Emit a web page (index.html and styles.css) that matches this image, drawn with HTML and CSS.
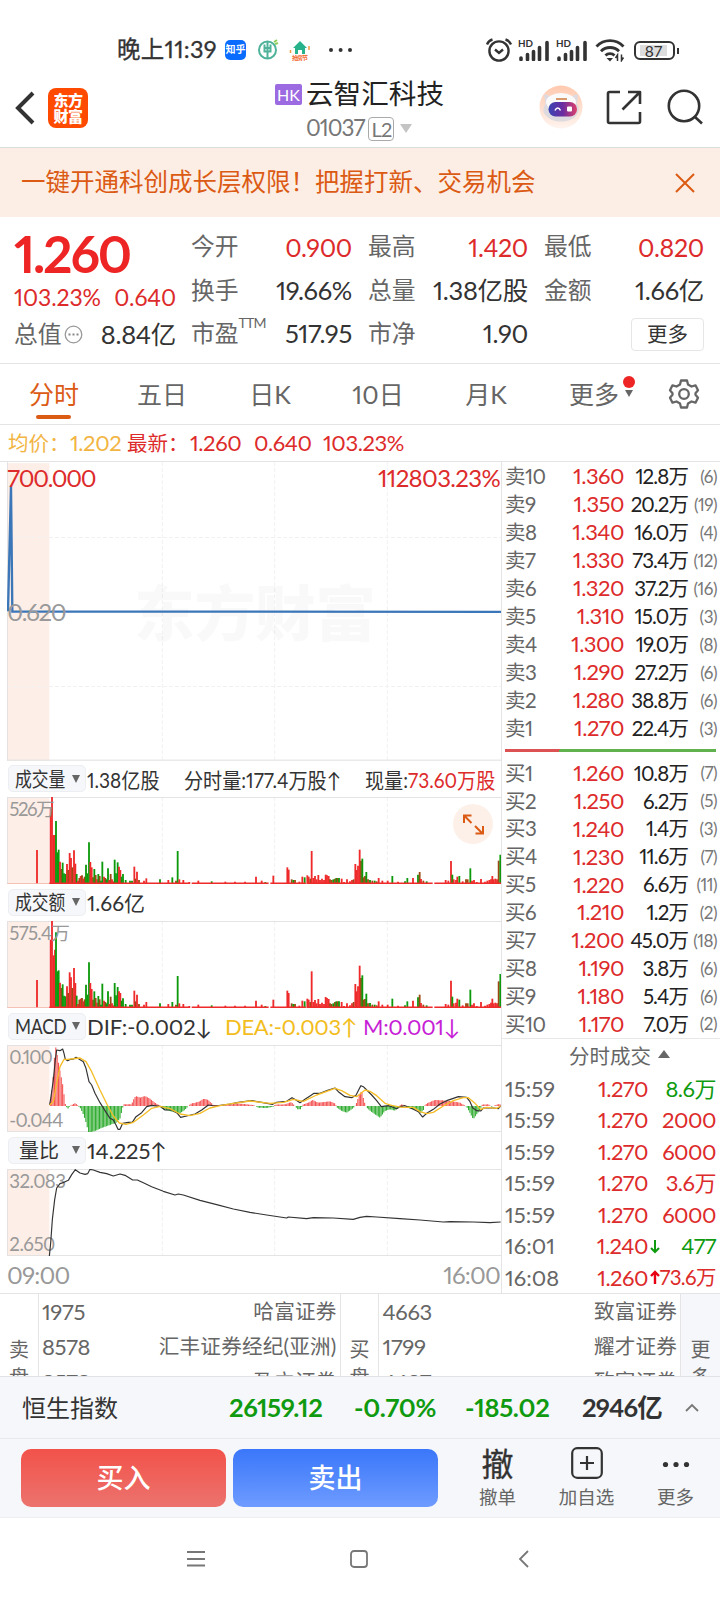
FILE: index.html
```html
<!DOCTYPE html>
<html lang="zh-CN">
<head>
    <meta charset="utf-8">
    <title>云智汇科技 01037</title>
    <link rel="stylesheet" href="styles.css">
</head>
<body>

<div class="status">
    <span class="clock">晚上11:39</span>
    <span class="zhihu">知乎</span>
    <svg class="st-bank" width="22" height="22" viewBox="0 0 22 22" fill="none" stroke="#4fb39c" stroke-width="2">
        <circle cx="10.500" cy="11" r="8.500"/>
        <path d="M10.500 3v16M7.500 5.500v7h6v-7M7.500 9h6"/>
        <path d="M17 3l3-2M18 5l3-1" stroke="#8fce5a"/>
    </svg>
    <svg class="st-house" width="22" height="22" viewBox="0 0 22 22">
        <path d="M11 2L4 9h2v6h3v-4h4v4h3V9h2z" fill="#27b28c"/>
        <path d="M1.500 11v3M20 7v4" stroke="#f29b3c" stroke-width="1.500"/>
        <text class="house-txt" x="3" y="21" textLength="16">抢房节</text>
    </svg>
    <svg class="st-dots" width="26" height="6" viewBox="0 0 26 6" fill="#333">
        <circle cx="3" cy="3" r="2"/><circle cx="12.600" cy="3" r="2"/><circle cx="22" cy="3" r="2"/>
    </svg>
    <svg class="st-alarm" width="26" height="24" viewBox="0 0 26 24" fill="none" stroke="#333" stroke-width="2.400">
        <circle cx="13" cy="13" r="9.600"/>
        <path d="M9 11.500l4 3.500 4-3.500M1 6.500C2 4 4 2.200 6.500 1.500M25 6.500C24 4 22 2.200 19.500 1.500"/>
    </svg>
    <svg class="st-signal" width="32" height="22" viewBox="0 0 32 22">
        <text class="hd" x="0" y="8" textLength="15" lengthAdjust="spacingAndGlyphs">HD</text>
        <path d="M3 20.500v-1.500M9.500 20.500v-5M15.500 20.500v-8M21.500 20.500v-12M29 20.500v-17" stroke="#333" stroke-width="3.600" stroke-linecap="round"/>
    </svg>
    <svg class="st-signal2" width="32" height="22" viewBox="0 0 32 22">
        <text class="hd" x="0" y="8" textLength="15" lengthAdjust="spacingAndGlyphs">HD</text>
        <path d="M3 20.500v-1.500M9.500 20.500v-5M15.500 20.500v-8M21.500 20.500v-12M29 20.500v-17" stroke="#333" stroke-width="3.600" stroke-linecap="round"/>
    </svg>
    <svg class="st-wifi" width="30" height="23" viewBox="0 0 30 23" fill="none" stroke="#333" stroke-width="2.900">
        <path d="M1.500 7.500C9-.3 21-.3 28.500 7.500M6 12.200c5-5 13-5 18 0M10.500 16.500c2.500-2.500 6.500-2.500 9 0"/>
        <path d="M11.500 19L15 22.500l3-3.500z" fill="#333" stroke="none"/>
        <path d="M22.500 22v-6l-2 3M26.500 15.500v6l2-3" stroke-width="1.500"/>
    </svg>
    <span class="battery"><span>87</span></span>
</div>

<div class="header">
    <svg class="back" width="20" height="34" viewBox="0 0 20 34" fill="none" stroke="#333" stroke-width="4">
        <path d="M18 2L3 17l15 15"/>
    </svg>
    <div class="logo">东方<br>财富</div>
    <div class="title">
        <div class="name"><span class="hk">HK</span>云智汇科技</div>
        <div class="code">01037<span class="l2">L2</span><i class="caret"></i></div>
    </div>
    <svg class="robot" width="44" height="44" viewBox="0 0 44 44">
        <defs>
            <linearGradient id="halo" x1="0" y1="0" x2="0" y2="1">
                <stop offset="0" stop-color="#ffc9ae"/><stop offset="1" stop-color="#fff4ef"/>
            </linearGradient>
            <linearGradient id="visor">
                <stop offset="0" stop-color="#3a44b4"/><stop offset=".5" stop-color="#6a2ca0"/><stop offset="1" stop-color="#e0406a"/>
            </linearGradient>
        </defs>
        <circle cx="22" cy="22" r="21.500" fill="url(#halo)"/>
        <path d="M5 10c2-1 4 0 7 2h20c3-2 5-3 7-2l-1 9c3 3 2 9-1 12-4 4-9 5.500-15 5.500S11 35 7.500 31c-4-3-4-8-1-12z" fill="#dedbe0"/>
        <ellipse cx="22" cy="17" rx="15" ry="9" fill="#fbfafb"/>
        <path d="M17 14h11" stroke="#d89a6a" stroke-width="2"/>
        <rect x="9.500" y="17" width="28.500" height="14.500" rx="7.200" fill="url(#visor)"/>
        <path d="M16 25.500c1.500-3.500 4-3.500 5.500 0" fill="none" stroke="#fff" stroke-width="1.500"/>
        <rect x="28" y="21.500" width="5" height="5" rx="1" fill="#fff"/>
    </svg>
    <svg class="share" width="36" height="36" viewBox="0 0 36 36" fill="none" stroke="#333" stroke-width="2.600" stroke-linejoin="round">
        <path d="M14 2H3.500A1.500 1.500 0 0 0 2 3.500v28A1.500 1.500 0 0 0 3.500 33h29a1.500 1.500 0 0 0 1.500-1.500V22M22 2h12v12M34 2L16.500 19.500"/>
    </svg>
    <svg class="search" width="36" height="36" viewBox="0 0 36 36" fill="none" stroke="#333" stroke-width="2.600">
        <circle cx="17" cy="17" r="15.200"/><path d="M27.500 27.500l7.500 7"/>
    </svg>
</div>

<div class="banner">
    <span>一键开通科创成长层权限！把握打新、交易机会</span>
    <svg width="20" height="20" viewBox="0 0 20 20" stroke="#db5a14" stroke-width="2"><path d="M1 1l18 18M19 1L1 19"/></svg>
</div>

<div class="quote">
    <div class="last">
        <div class="price">1.260</div>
        <div class="change"><span>103.23%</span><span>0.640</span></div>
        <div class="cap"><label>总值</label>
            <svg width="19" height="19" viewBox="0 0 19 19"><circle cx="9.500" cy="9.500" r="8.300" fill="none" stroke="#999" stroke-width="1.300"/><path d="M4.500 9.500h2M8.500 9.500h2M12.500 9.500h2" stroke="#888" stroke-width="2"/></svg>
            <b>8.84亿</b></div>
    </div>
    <div class="stats">
        <div><label>今开</label><b class="up">0.900</b></div>
        <div><label>最高</label><b class="up">1.420</b></div>
        <div><label>最低</label><b class="up">0.820</b></div>
        <div><label>换手</label><b>19.66%</b></div>
        <div><label>总量</label><b>1.38亿股</b></div>
        <div><label>金额</label><b>1.66亿</b></div>
        <div><label>市盈<sup>TTM</sup></label><b>517.95</b></div>
        <div><label>市净</label><b>1.90</b></div>
        <div><span class="more-btn">更多</span></div>
    </div>
</div>

<div class="tabs">
    <span class="tab on">分时</span>
    <span class="tab">五日</span>
    <span class="tab">日K</span>
    <span class="tab">10日</span>
    <span class="tab">月K</span>
    <span class="tab more">更多<i class="dot"></i><i class="tri"></i></span>
    <svg class="gear" width="32" height="32" viewBox="0 0 32 32" fill="none" stroke="#666" stroke-width="2.300" stroke-linejoin="round">
        <path d="M13 2.500h6l1 4 3.500 2 4-1.200 2.500 5-2.500 3v1.400l2.500 3-2.500 5-4-1.200-3.500 2-1 4h-6l-1-4-3.500-2-4 1.200-2.500-5 2.500-3v-1.400l-2.500-3 2.500-5 4 1.200 3.500-2z"/>
        <circle cx="16" cy="16" r="4.800"/>
    </svg>
</div>

<div class="avg">
    <span class="gold">均价：</span><span class="gold num">1.202</span>
    <span>最新：</span><span class="num">1.260</span><span class="num">0.640</span><span class="num">103.23%</span>
</div>

<div class="main">
    <div class="charts">
        <!-- chart coordinates are 3 units per pixel -->
        <svg class="chart price-chart" viewBox="21 5 1482 896">
            <rect class="pre" x="21" y="8" width="127" height="893"/>
            <path class="grid" d="M487 5v896M824 5v896M1162 5v896M21 231h1482M21 678h1482"/>
            <path class="edge" d="M22 5v896M21 899h1482"/>
            <text class="mark" x="402" y="526" textLength="726">东方财富</text>
            <path class="trend" d="M24 452L33 75 37 453 1503 454"/>
            <text class="t-up" x="22" y="79" textLength="268">700.000</text>
            <text class="t-up" x="1134" y="79" textLength="368">112803.23%</text>
            <text class="t-mid" x="22" y="480" textLength="178">0.620</text>
        </svg>

        <div class="bar first">
            <span class="pill"><em>成交量</em></span>
            <span class="v1">1.38亿股</span><span class="v2">分时量:177.4万股↑</span><span class="v3">现量:<i>73.60万股</i></span>
        </div>
        <div class="sub">
            <svg class="chart" viewBox="21 0 1482 261">
                <rect class="pre" x="21" y="0" width="127" height="261"/>
                <path class="grid" d="M487 0v261M824 0v261M1162 0v261"/>
                <path class="edge" d="M1503 1H22v261"/>
                <g id="vol"></g>
                <text class="t-sub" x="28" y="56" textLength="136">526万</text>
            </svg>
            <svg class="expand" width="40" height="40" viewBox="0 0 40 40">
                <circle cx="20" cy="20" r="20" fill="#fdf0e9"/>
                <path d="M18.500 11.500H11V19M11.500 12l7 7M22 22l7.500 7.500M30 22v7.500h-7.500" fill="none" stroke="#db5a14" stroke-width="2"/>
            </svg>
        </div>

        <div class="bar">
            <span class="pill"><em>成交额</em></span><span class="amt">1.66亿</span>
        </div>
        <svg class="chart" viewBox="21 0 1482 261">
            <rect class="pre" x="21" y="0" width="127" height="261"/>
            <path class="grid" d="M487 0v261M824 0v261M1162 0v261"/>
            <path class="edge" d="M1503 1H22v261"/>
            <g id="amt"></g>
            <text class="t-sub" x="28" y="56" textLength="182">575.4万</text>
        </svg>

        <div class="bar macd">
            <span class="pill"><em class="latin">MACD</em></span><span class="dif">DIF:-0.002↓</span><span class="dea">DEA:-0.003↑</span><span class="m">M:0.001↓</span>
        </div>
        <svg class="chart" viewBox="21 45 1482 261">
            <rect class="pre" x="21" y="45" width="127" height="261"/>
            <path class="grid" d="M487 45v261M824 45v261M1162 45v261"/>
            <path class="edge" d="M1503 46H22v259h1481"/>
            <text class="t-sub" x="28" y="102" textLength="130">0.100</text>
            <text class="t-sub" x="28" y="292" textLength="162">-0.044</text>
            <g id="hist"></g>
            <polyline class="line" points="149,225 153,200 160,150 166,90 170,60 180,62 188,57 192,70 196,88 203,92 212,88 221,87 228,82 238,88 250,95 258,115 267,155 275,165 285,190 300,218 315,242 330,265 340,270 348,285 354,298 360,298 368,280 385,277 397,277 408,260 425,248 440,230 455,226 480,229 495,240 515,240 532,250 542,262 560,258 585,252 605,240 625,225 645,228 690,222 715,217 755,212 785,217 818,223 830,217 860,214 876,203 888,210 900,218 915,208 930,198 942,190 960,190 985,180 1005,174 1015,185 1035,200 1055,203 1068,196 1080,172 1083,167 1090,170 1100,180 1115,195 1130,212 1144,230 1165,227 1175,230 1190,236 1200,230 1215,227 1240,238 1255,245 1265,258 1268,261 1280,250 1300,238 1320,222 1340,212 1360,205 1375,200 1400,202 1410,215 1418,233 1430,242 1442,243 1450,234 1480,234 1495,236 1502,228"/>
            <polyline class="line gold-line" points="149,225 160,215 170,160 180,110 192,88 203,88 240,84 258,95 275,125 300,180 322,225 340,258 358,279 378,283 400,277 430,255 455,235 480,229 510,236 540,252 570,257 600,250 630,234 660,227 700,220 750,213 810,220 850,217 880,208 910,214 950,195 1005,175 1025,182 1050,196 1070,200 1083,190 1095,180 1110,184 1130,197 1155,220 1175,226 1205,232 1240,232 1260,245 1280,251 1300,247 1330,228 1360,212 1390,203 1405,203 1425,220 1442,238 1460,232 1490,235 1502,228"/>
        </svg>

        <div class="bar">
            <span class="pill wide"><em>量比</em></span><span class="ratio">14.225↑</span>
        </div>
        <svg class="chart" viewBox="21 418 1482 261">
            <rect class="pre" x="21" y="418" width="127" height="261"/>
            <path class="grid" d="M487 418v261M824 418v261M1162 418v261"/>
            <path class="edge" d="M1503 419H22v259h1481"/>
            <text class="t-sub" x="28" y="474" textLength="170">32.083</text>
            <text class="t-sub" x="28" y="665" textLength="138">2.650</text>
            <polyline class="line" points="148,680 152,640 157,570 164,510 170,475 180,462 192,458 205,452 215,435 226,420 240,430 255,434 263,432 270,419 280,421 300,428 320,432 340,439 360,433 375,437 398,451 412,451 430,459 455,471 490,485 525,496 535,493 550,496 600,512 650,525 700,538 750,548 800,556 860,565 865,562 920,567 940,564 1000,565 1060,569 1080,563 1100,560 1130,562 1200,567 1260,571 1330,577 1350,576 1420,577 1470,579 1502,577"/>
        </svg>
        <div class="axis"><span>09:00</span><span>16:00</span></div>
    </div>

    <div class="side">
        <div class="book">
            <div><span>卖10</span><b>1.360</b><em>12.8万</em><i>(6)</i></div>
            <div><span>卖9</span><b>1.350</b><em>20.2万</em><i>(19)</i></div>
            <div><span>卖8</span><b>1.340</b><em>16.0万</em><i>(4)</i></div>
            <div><span>卖7</span><b>1.330</b><em>73.4万</em><i>(12)</i></div>
            <div><span>卖6</span><b>1.320</b><em>37.2万</em><i>(16)</i></div>
            <div><span>卖5</span><b>1.310</b><em>15.0万</em><i>(3)</i></div>
            <div><span>卖4</span><b>1.300</b><em>19.0万</em><i>(8)</i></div>
            <div><span>卖3</span><b>1.290</b><em>27.2万</em><i>(6)</i></div>
            <div><span>卖2</span><b>1.280</b><em>38.8万</em><i>(6)</i></div>
            <div><span>卖1</span><b>1.270</b><em>22.4万</em><i>(3)</i></div>
        </div>
        <div class="ratio-bar"></div>
        <div class="book bids">
            <div><span>买1</span><b>1.260</b><em>10.8万</em><i>(7)</i></div>
            <div><span>买2</span><b>1.250</b><em>6.2万</em><i>(5)</i></div>
            <div><span>买3</span><b>1.240</b><em>1.4万</em><i>(3)</i></div>
            <div><span>买4</span><b>1.230</b><em>11.6万</em><i>(7)</i></div>
            <div><span>买5</span><b>1.220</b><em>6.6万</em><i>(11)</i></div>
            <div><span>买6</span><b>1.210</b><em>1.2万</em><i>(2)</i></div>
            <div><span>买7</span><b>1.200</b><em>45.0万</em><i>(18)</i></div>
            <div><span>买8</span><b>1.190</b><em>3.8万</em><i>(6)</i></div>
            <div><span>买9</span><b>1.180</b><em>5.4万</em><i>(6)</i></div>
            <div><span>买10</span><b>1.170</b><em>7.0万</em><i>(2)</i></div>
        </div>
        <div class="ticks-head">分时成交<i></i></div>
        <div class="ticks">
            <div><span>15:59</span><b>1.270</b><u></u><em class="down">8.6万</em></div>
            <div><span>15:59</span><b>1.270</b><u></u><em>2000</em></div>
            <div><span>15:59</span><b>1.270</b><u></u><em>6000</em></div>
            <div><span>15:59</span><b>1.270</b><u></u><em>3.6万</em></div>
            <div><span>15:59</span><b>1.270</b><u></u><em>6000</em></div>
            <div><span>16:01</span><b>1.240</b><u><svg width="10" height="15" viewBox="0 0 10 15" fill="none" stroke="#0f9a0f" stroke-width="2"><path d="M5 1v12M1 9l4 4 4-4"/></svg></u><em class="down">477</em></div>
            <div><span>16:08</span><b>1.260</b><u><svg width="10" height="15" viewBox="0 0 10 15" fill="none" stroke="#e60012" stroke-width="2.400"><path d="M5 14V2M1 6l4-4 4 4"/></svg></u><em class="tight">73.6万</em></div>
        </div>
    </div>
</div>

<div class="brokers">
    <div class="tag">卖<br>盘</div>
    <div class="list">
        <div><span>1975</span><em>哈富证券</em></div>
        <div><span>8578</span><em>汇丰证券经纪(亚洲)</em></div>
        <div><span>8578</span><em>盈立证券</em></div>
    </div>
    <div class="tag">买<br>盘</div>
    <div class="list">
        <div><span>4663</span><em>致富证券</em></div>
        <div><span>1799</span><em>耀才证券</em></div>
        <div><span>4637</span><em>致富证券</em></div>
    </div>
    <div class="tag all">更<br>多</div>
</div>

<div class="index">
    <span class="idx-name">恒生指数</span>
    <b>26159.12</b>
    <b>-0.70%</b>
    <b>-185.02</b>
    <b class="dark">2946亿</b>
    <svg width="14" height="9" viewBox="0 0 14 9" fill="none" stroke="#777" stroke-width="1.800"><path d="M1 8l6-6 6 6"/></svg>
</div>

<div class="actions">
    <div class="btn buy">买入</div>
    <div class="btn sell">卖出</div>
    <div class="act"><span class="big">撤</span>撤单</div>
    <div class="act">
        <svg width="32" height="32" viewBox="0 0 32 32" fill="none" stroke="#333" stroke-width="2.200"><rect x="1.200" y="1.200" width="29.600" height="29.600" rx="5"/><path d="M16 9v14M9 16h14"/></svg>加自选
    </div>
    <div class="act">
        <svg width="32" height="32" viewBox="0 0 32 32" fill="#333"><circle cx="5.500" cy="17.500" r="2.600"/><circle cx="16" cy="17.500" r="2.600"/><circle cx="26.500" cy="17.500" r="2.600"/></svg>更多
    </div>
</div>

<div class="nav">
    <svg width="18" height="18" viewBox="0 0 18 18" stroke="#777" stroke-width="1.800"><path d="M0 2h18M0 9h18M0 15.500h18"/></svg>
    <svg width="18" height="18" viewBox="0 0 18 18" fill="none" stroke="#777" stroke-width="1.800"><rect x="1" y="1" width="16" height="16" rx="3"/></svg>
    <svg width="11" height="18" viewBox="0 0 11 18" fill="none" stroke="#777" stroke-width="1.800"><path d="M10 1L2 9l8 8"/></svg>
</div>

<script src="charts.js"></script>
</body>
</html>
```
FILE: styles.css
```css
* {
    box-sizing: border-box;
}

body {
    margin: 0;
    width: 720px;
    height: 1600px;
    overflow: hidden;
    background: #fff;
    color: #333;
    font-family: Lato, "Noto Sans CJK SC", sans-serif;
    font-variant-numeric: proportional-nums;
    font-size: 24px;
    line-height: 1;
    white-space: nowrap;
}

b, em, i, u {
    font-weight: normal;
    font-style: normal;
    text-decoration: none;
}

svg {
    display: block;
    flex: none;
}

.up {
    color: #dd2b2b;
}

/* status bar */
.status {
    display: flex;
    align-items: center;
    height: 72px;
    padding: 28px 0 0 117px;
    font-size: 23px;
}

.clock {
    width: 108px;
    font-size: 23.500px;
    letter-spacing: .3px;
    -webkit-text-stroke: .3px #333;
}

.zhihu {
    width: 21px;
    height: 20px;
    border-radius: 5px;
    background: #0a6cff;
    color: #fff;
    font-size: 10px;
    font-weight: 700;
    line-height: 19px;
    text-align: center;
}

.st-bank { margin-left: 11px; }
.st-house { margin-left: 10px; }
.st-dots { margin-left: 17px; }
.st-alarm { margin-left: 132px; }
.st-signal { margin-left: 6px; }
.st-signal2 { margin-left: 6px; }
.st-wifi { margin-left: 7px; }

.house-txt {
    font-size: 6px;
    font-weight: 700;
    fill: #f2662b;
}

.hd {
    font-size: 10px;
    font-weight: 700;
    fill: #333;
}

.battery {
    display: flex;
    position: relative;
    width: 41px;
    height: 19px;
    margin-left: 9px;
    padding: 2px;
    border: 2px solid #333;
    border-radius: 6px;
}

.battery::after {
    content: "";
    position: absolute;
    right: -6px;
    top: 5px;
    width: 2px;
    height: 6px;
    background: #333;
}

.battery span {
    width: 27px;
    margin-left: 2px;
    background: #ddd;
    font-size: 15.500px;
    line-height: 12px;
    text-align: center;
}

/* header */
.header {
    display: flex;
    height: 76px;
    border-bottom: 1px solid #d8dedb;
}

.back {
    margin: 19px 0 0 15px;
}

.logo {
    width: 40px;
    height: 40px;
    margin: 16px 0 0 13px;
    padding-top: 4px;
    border-radius: 8px;
    background: #ff4a00;
    color: #fff;
    font-size: 15px;
    font-weight: 900;
    line-height: 16px;
    letter-spacing: -.5px;
    text-align: center;
}

.title {
    width: 265px;
    margin-left: 187px;
}

.name {
    display: flex;
    align-items: center;
    height: 43px;
    font-size: 27.600px;
    color: #222;
}

.hk {
    width: 27px;
    height: 21px;
    margin: 2px 4px 0 0;
    border-radius: 2px;
    background: #9c6be2;
    color: #fff;
    font-size: 16px;
    line-height: 21px;
    text-align: center;
}

.code {
    display: flex;
    align-items: center;
    height: 26px;
    padding-left: 31px;
    color: #777;
    font-size: 22.500px;
    letter-spacing: -1px;
}

.l2 {
    width: 26px;
    height: 24px;
    margin: 1px 0 0 4px;
    border: 1.500px solid #aaa;
    border-radius: 4px;
    font-size: 20px;
    line-height: 22px;
    text-align: center;
}

.caret {
    margin-left: 6px;
    border: 6.500px solid transparent;
    border-top: 9px solid #c4c4c4;
    border-bottom: 0;
}

.robot { margin: 13px 0 0 -1px; }
.share { margin: 18px 0 0 23px; }
.search { margin: 17px 0 0 25px; }

.banner {
    display: flex;
    align-items: center;
    justify-content: space-between;
    height: 69px;
    padding: 0 25px 0 21px;
    background: #fceee5;
    color: #db5a14;
    font-size: 24.500px;
}

/* quote */
.quote {
    display: flex;
    height: 147px;
    padding: 8px 14px 0 14px;
    border-bottom: 1px solid #e4e4e4;
}

.last {
    width: 162px;
    margin-right: 15px;
    color: #dd2b2b;
}

.price {
    height: 57px;
    color: #ee2525;
    font-size: 51.500px;
    font-weight: 700;
    line-height: 57px;
    letter-spacing: -2.200px;
}

.change {
    display: flex;
    justify-content: space-between;
    height: 30px;
    font-size: 23px;
    line-height: 30px;
    letter-spacing: -.1px;
}

.cap {
    display: flex;
    align-items: center;
    height: 45px;
    color: #333;
}

.cap svg {
    margin-left: 2px;
}

.cap b {
    margin-left: auto;
}

.quote label {
    color: #666;
    font-size: 23.800px;
}

.quote b {
    font-size: 25.500px;
    letter-spacing: -.3px;
}

.stats {
    display: grid;
    grid-template-columns: 161px 160px 160px;
    grid-template-rows: 44px 43px 44px;
    column-gap: 16px;
}

.stats div {
    display: flex;
    align-items: center;
    justify-content: space-between;
}

.stats .up {
    font-size: 25px;
}

.quote sup {
    display: inline-block;
    width: 0;
    font-size: 14px;
    line-height: 0;
    letter-spacing: -.8px;
    vertical-align: 14px;
}

.more-btn {
    width: 73px;
    height: 33px;
    margin-left: auto;
    border: 1px solid #e6e6e6;
    border-radius: 4px;
    font-size: 20.500px;
    line-height: 30px;
    text-align: center;
}

/* tabs */
.tabs {
    display: flex;
    align-items: center;
    height: 61px;
    border-bottom: 1px solid #e4e4e4;
}

.tab {
    position: relative;
    width: 108px;
    color: #666;
    font-size: 25px;
    line-height: 60px;
    text-align: center;
}

.on {
    color: #db5a14;
}

.on::after {
    content: "";
    position: absolute;
    left: 36px;
    top: 51px;
    width: 35px;
    height: 4px;
    border-radius: 2px;
    background: #db5a14;
}

.dot {
    position: absolute;
    left: 83px;
    top: 12px;
    width: 12px;
    height: 12px;
    border-radius: 50%;
    background: #ee2525;
}

.tri {
    position: absolute;
    left: 85px;
    top: 26px;
    border: 4.500px solid transparent;
    border-top: 7px solid #666;
    border-bottom: 0;
}

.gear {
    margin-left: 20px;
}

.avg {
    display: grid;
    grid-template-columns: 62px 57px 63px 64px 69px 90px;
    align-items: center;
    height: 37px;
    padding-left: 8px;
    border-bottom: 1px solid #e4e4e4;
    color: #dd2b2b;
    font-size: 20.500px;
}

.avg .num {
    font-size: 22px;
    letter-spacing: -.4px;
}

.avg .gold {
    color: #f2b544;
}

/* charts */
.main {
    display: flex;
    height: 832px;
    border-bottom: 1px solid #e4e4e4;
}

.charts {
    width: 501px;
}

.chart {
    width: 494px;
    height: 87px;
    margin-left: 7px;
}

.price-chart {
    height: 299px;
}

.pre {
    fill: #fdeee7;
}

.grid {
    fill: none;
    stroke: #f1f1f1;
    stroke-width: 3;
    stroke-dasharray: 12 6;
}

.edge {
    fill: none;
    stroke: #dfdfdf;
    stroke-width: 3;
}

.mark {
    font-size: 182px;
    font-weight: 900;
    fill: #000;
    fill-opacity: .025;
}

.trend {
    fill: none;
    stroke: #3b76b8;
    stroke-width: 7;
}

.t-up, .t-mid {
    font-size: 72px;
    fill: #dd2b2b;
}

.t-mid {
    fill: #999;
}

.t-sub {
    font-size: 56px;
    fill: #999;
}

.line {
    fill: none;
    stroke: #333;
    stroke-width: 3.500;
    stroke-linejoin: round;
}

.gold-line {
    stroke: #f5bd27;
    stroke-width: 4;
}

.sub {
    position: relative;
}

.expand {
    position: absolute;
    left: 453px;
    top: 7px;
}

.bar {
    display: flex;
    align-items: center;
    height: 37px;
    padding-left: 8px;
    font-size: 21px;
}

.bar.first {
    height: 36px;
}

.pill {
    display: flex;
    align-items: center;
    justify-content: space-between;
    width: 78px;
    height: 27px;
    margin: 0 1px 1px 0;
    padding: 0 5px 0 6px;
    border: 1px solid #eceef1;
    border-radius: 5px;
    background: #f5f7fa;
    font-size: 20px;
}

.pill em {
    width: 50px;
    transform: scaleX(.84);
    transform-origin: left;
}

.pill .latin {
    font-size: 20.500px;
}

.pill::after {
    content: "";
    border: 4.500px solid transparent;
    border-top: 8px solid #666;
    border-bottom: 0;
}

.pill.wide {
    padding-left: 10px;
}

.pill.wide em {
    transform: none;
}

.v1, .v2, .v3 {
    transform: scaleX(.91);
    transform-origin: left;
}

.v1 { width: 97px; }
.v2 { width: 181px; }
.v3 { width: 130px; }

.v3 i {
    color: #dd2b2b;
}

.macd, .ratio {
    font-size: 22px;
    letter-spacing: -.1px;
}

.dif { width: 138px; }

.dea {
    width: 138px;
    color: #f2bd1d;
    letter-spacing: -.3px;
}

.m {
    color: #c71fd6;
    letter-spacing: -.3px;
}

.axis {
    display: flex;
    justify-content: space-between;
    padding: 7px 1px 0 7px;
    color: #999;
    font-size: 24px;
    letter-spacing: -.8px;
}

/* order book */
.side {
    width: 219px;
    padding: 0 4px 0 4px;
    border-left: 1px solid #e4e4e4;
    font-size: 22px;
}

.book div {
    display: grid;
    grid-template-columns: 58px 60px 64px 29px;
    align-items: center;
    height: 28px;
    text-align: right;
    letter-spacing: -.5px;
}

.bids div {
    height: 27.900px;
}

.book span {
    margin-left: -1px;
    color: #666;
    font-size: 20.500px;
    text-align: left;
}

.book b {
    color: #dd2b2b;
}

.book em {
    color: #222;
    font-size: 20.500px;
    letter-spacing: -.9px;
}

.book i {
    color: #777;
    font-size: 17px;
}

.ratio-bar {
    height: 3px;
    margin: 7px 0 7px -1px;
    background: linear-gradient(120deg, #dc5252 26%, #62b14f 26%);
}

.ticks-head {
    display: flex;
    align-items: center;
    height: 35px;
    margin: 0 -4px 0 -4px;
    padding-left: 67px;
    border-top: 1px solid #e8e8e8;
    color: #666;
    font-size: 20.500px;
}

.ticks-head i {
    margin: -4px 0 0 7px;
    border: 6px solid transparent;
    border-top: 0;
    border-bottom: 8px solid #666;
}

.ticks div {
    display: grid;
    grid-template-columns: 72px 70px 14px 54px;
    align-items: center;
    height: 31.500px;
    color: #dd2b2b;
    text-align: right;
    letter-spacing: -.5px;
}

.ticks span {
    margin-left: -1px;
    color: #666;
    letter-spacing: 0;
    text-align: left;
}

.ticks u {
    padding-left: 2px;
}

.ticks .down {
    color: #0f9a0f;
}

.ticks .tight {
    margin-left: -4px;
    font-size: 20.500px;
    letter-spacing: -.6px;
}

/* broker queue */
.brokers {
    display: flex;
    height: 82px;
    overflow: hidden;
    color: #666;
}

.tag {
    width: 39px;
    padding-top: 41px;
    border-right: 1px solid #e4e4e4;
    font-size: 20px;
    line-height: 28px;
    text-align: center;
}

.tag.all {
    border: 0;
    background: #f5f7fa;
}

.list {
    width: 302px;
    border-right: 1px solid #e4e4e4;
    padding: 0 3px;
}

.list div {
    display: flex;
    align-items: center;
    justify-content: space-between;
    height: 35px;
    font-size: 22px;
    letter-spacing: -.3px;
}

.list em {
    font-size: 20.600px;
    letter-spacing: .2px;
}

/* index strip */
.index {
    display: grid;
    grid-template-columns: 207px 125px 111px 117px 103px 16px;
    align-items: center;
    height: 63px;
    padding-left: 22px;
    border-top: 1px solid #dfe1e4;
    border-bottom: 1px solid #e6e8eb;
    background: #f5f7fa;
}

.index b {
    color: #0f9a0f;
    font-size: 25.500px;
    font-weight: 700;
    letter-spacing: -.3px;
}

.index .dark {
    color: #333;
    letter-spacing: -.8px;
}

.actions {
    display: flex;
    height: 78px;
    padding: 10px 0 0 21px;
    background: #f5f7fa;
}

.btn {
    width: 205px;
    height: 58px;
    margin-right: 7px;
    border-radius: 10px;
    color: #fff;
    font-size: 27px;
    font-weight: 500;
    line-height: 57px;
    text-align: center;
}

.buy {
    background: linear-gradient(#f2524a, #ec736e);
}

.sell {
    background: linear-gradient(#3a77fa, #6e9bff);
}

.act {
    display: flex;
    flex-direction: column;
    align-items: center;
    width: 89px;
    margin-top: -2px;
    color: #666;
    font-size: 18.500px;
    line-height: 37px;
}

.sell + .act {
    margin-left: 8px;
}

.big {
    height: 32px;
    color: #333;
    font-size: 32px;
    line-height: 34px;
    -webkit-text-stroke: .3px #333;
}

.nav {
    display: flex;
    align-items: center;
    height: 83px;
    padding-left: 187px;
    border-top: 1px solid #eceef0;
}

.nav svg + svg {
    margin-left: 145px;
}

.nav svg:last-child {
    margin-left: 150px;
}
```
FILE: charts.js
```javascript
var NS = 'http://www.w3.org/2000/svg';
var RED = '#ee2a2a', GREEN = '#0c9a0c', MIX = '#9a4a12';
var COLORS = { r: RED, g: GREEN, m: MIX };

// x, volume height, turnover height, colour
var bars = [
    [111,102,84,'r'],[152,230,205,'r'],[156,261,261,'r'],[161,147,158,'r'],[165,147,175,'r'],[168,189,227,'g'],[172,95,110,'g'],[176,103,113,'g'],
    [180,67,76,'r'],[184,45,60,'m'],[188,64,71,'g'],[192,32,37,'g'],[197,30,35,'g'],[201,60,65,'r'],[205,42,45,'m'],[209,93,107,'r'],
    [213,78,92,'r'],[217,50,60,'m'],[222,101,120,'r'],[226,61,75,'r'],[230,30,37,'g'],[234,10,12,'r'],[238,18,25,'m'],[242,24,28,'r'],
    [246,26,30,'m'],[250,16,20,'r'],[254,22,26,'m'],[258,58,70,'g'],[262,32,40,'g'],[267,125,137,'g'],[271,66,75,'r'],[275,50,57,'r'],
    [279,20,25,'m'],[283,45,50,'g'],[287,27,30,'m'],[291,14,16,'r'],[295,30,36,'g'],[299,24,26,'m'],[303,10,10,'g'],[307,67,73,'g'],
    [312,22,22,'r'],[316,18,18,'m'],[320,14,14,'g'],[324,47,50,'g'],[328,12,12,'r'],[332,30,34,'m'],[336,14,14,'r'],[340,8,8,'r'],
    [344,73,75,'g'],[348,32,38,'g'],[353,65,63,'g'],[357,52,50,'r'],[361,42,45,'r'],[365,22,22,'g'],[369,30,29,'g'],[377,12,12,'g'],
    [390,10,10,'g'],[396,10,10,'g'],[403,52,52,'r'],[407,16,20,'m'],[411,37,40,'r'],[417,12,12,'m'],[432,10,10,'r'],[439,17,18,'r'],
    [480,14,14,'g'],[505,12,12,'r'],[517,20,18,'g'],[528,10,10,'m'],[533,99,96,'g'],[538,14,14,'r'],[550,12,12,'r'],[568,6,6,'r'],
    [595,10,10,'r'],[635,8,8,'g'],[676,7,7,'r'],[705,7,7,'r'],[735,7,7,'r'],[768,22,22,'r'],[785,10,10,'r'],[796,6,6,'g'],
    [820,25,25,'r'],[862,50,52,'r'],[866,43,45,'r'],[875,14,14,'m'],[880,12,12,'g'],[885,12,12,'m'],[898,7,7,'r'],[907,22,22,'r'],
    [914,20,20,'g'],[922,26,28,'r'],[926,22,25,'r'],[931,16,18,'m'],[935,99,110,'r'],[940,18,18,'r'],[945,24,24,'r'],[950,14,14,'r'],
    [955,27,27,'r'],[960,12,12,'r'],[966,16,16,'r'],[972,12,12,'r'],[977,28,33,'r'],[981,26,30,'r'],[986,24,27,'r'],[990,14,14,'m'],
    [995,12,12,'m'],[1000,14,14,'g'],[1005,16,18,'m'],[1009,18,20,'g'],[1013,18,20,'m'],[1017,18,20,'g'],[1025,16,18,'r'],[1032,6,6,'r'],
    [1041,14,14,'r'],[1050,8,8,'r'],[1056,12,14,'r'],[1061,14,18,'m'],[1066,60,72,'r'],[1070,42,50,'r'],[1074,55,65,'r'],[1079,103,127,'r'],
    [1083,70,90,'m'],[1087,76,98,'g'],[1091,20,25,'m'],[1095,24,27,'m'],[1099,36,43,'g'],[1104,14,14,'m'],[1110,12,15,'g'],[1117,10,10,'m'],
    [1124,10,10,'g'],[1130,8,8,'m'],[1136,18,20,'r'],[1147,10,10,'r'],[1163,10,10,'r'],[1177,24,28,'g'],[1194,7,7,'r'],[1215,8,8,'g'],
    [1222,18,20,'g'],[1239,18,22,'r'],[1254,28,32,'g'],[1259,36,40,'m'],[1263,15,15,'r'],[1270,10,10,'m'],[1280,8,8,'g'],[1337,12,12,'r'],
    [1345,10,10,'r'],[1353,69,82,'r'],[1357,28,34,'g'],[1361,14,14,'r'],[1368,12,16,'r'],[1372,22,28,'r'],[1378,24,25,'g'],[1388,8,8,'r'],
    [1398,14,14,'m'],[1403,14,14,'m'],[1411,47,55,'g'],[1416,10,10,'r'],[1422,12,14,'r'],[1430,6,6,'r'],[1443,15,18,'r'],[1455,7,7,'r'],
    [1462,10,10,'r'],[1468,12,12,'r'],[1473,14,16,'r'],[1477,24,28,'r'],[1481,14,14,'r'],[1486,16,16,'r'],[1491,14,14,'r'],[1496,70,80,'m'],
    [1501,88,102,'g']
];

// x, bar length above (+) or below (-) the zero line
var macd = [
    [150,5],[158,70],[166,183],[172,150],[180,105],[188,65],[194,20],[197,0],[204,-8],[210,0],[226,9],[235,0],[242,-8],[250,-25],[260,-55],
    [265,-80],[285,-75],[300,-68],[330,-57],[350,-50],[360,-38],[368,-5],[372,5],[395,5],[400,18],[407,30],[420,25],[435,30],[450,22],
    [462,12],[480,0],[490,-10],[520,-18],[540,-22],[556,-10],[565,0],[575,8],[595,12],[612,22],[625,18],[640,3],[680,2],[710,8],[760,3],
    [775,-5],[800,-6],[820,-2],[825,4],[855,5],[874,12],[885,0],[893,-10],[903,-10],[908,4],[925,10],[938,18],[955,10],[990,14],[1005,8],
    [1012,-5],[1025,-15],[1040,-20],[1055,-10],[1064,-2],[1070,10],[1078,35],[1085,45],[1092,15],[1100,-5],[1115,-18],[1140,-35],
    [1155,-15],[1170,-10],[1185,-14],[1195,-3],[1203,5],[1215,2],[1225,-6],[1250,-12],[1262,-20],[1272,-10],[1275,4],[1285,10],[1305,18],
    [1330,17],[1355,14],[1380,10],[1400,-2],[1412,-25],[1420,-40],[1430,-25],[1440,-12],[1446,4],[1465,5],[1475,-2],[1490,4],[1502,6]
];

function addPath(parent, d, color, width) {
    var p = document.createElementNS(NS, 'path');
    p.setAttribute('d', d);
    p.setAttribute('stroke', color);
    p.setAttribute('stroke-width', width);
    p.setAttribute('fill', 'none');
    parent.appendChild(p);
}

function drawBars(id, col) {
    var g = document.getElementById(id);
    bars.forEach(function (b) {
        addPath(g, 'M' + b[0] + ' 261v-' + b[col], COLORS[b[3]], 5.5);
    });
    addPath(g, 'M22 260H148', '#f3b8ae', 3);
    addPath(g, 'M148 259H570M575 259H806M811 259H917M921 259H1298M1303 259H1503', RED, 5);
}

function drawMacd() {
    var g = document.getElementById('hist');
    var i = 0;
    for (var x = 151; x < 1502; x += 4.1) {
        while (macd[i + 1][0] < x) i++;
        var a = macd[i], b = macd[i + 1];
        var v = a[1] + (b[1] - a[1]) * (x - a[0]) / (b[0] - a[0]);
        addPath(g, 'M' + x.toFixed(1) + ' 228v' + (-v).toFixed(1), v > 0 ? '#f45252' : '#2fac2f', 3.3);
    }
}

drawBars('vol', 1);
drawBars('amt', 2);
drawMacd();
```
